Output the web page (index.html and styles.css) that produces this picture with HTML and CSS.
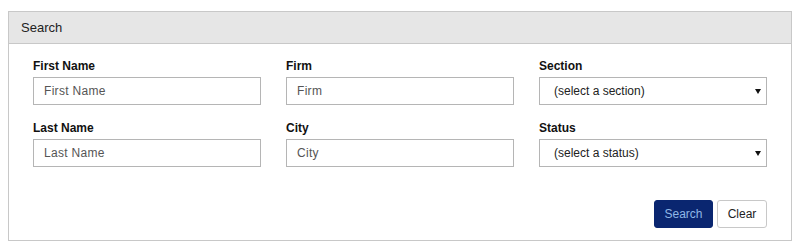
FILE: index.html
```html
<!DOCTYPE html>
<html lang="en">
<head>
    <meta charset="UTF-8">
    <meta name="viewport" content="width=device-width, initial-scale=1.0">
    <title>Search</title>
    <link rel="stylesheet" href="styles.css">
</head>
<body>
    <div class="panel">
        <div class="panel-heading">Search</div>
        <div class="panel-body">
            <div class="grid">
                <div class="field">
                    <label for="first">First Name</label>
                    <input type="text" id="first" placeholder="First Name">
                </div>
                <div class="field">
                    <label for="firm">Firm</label>
                    <input type="text" id="firm" placeholder="Firm">
                </div>
                <div class="field">
                    <label for="section">Section</label>
                    <div class="select-wrap">
                        <select id="section">
                            <option>(select a section)</option>
                        </select>
                    </div>
                </div>
                <div class="field">
                    <label for="last">Last Name</label>
                    <input type="text" id="last" placeholder="Last Name">
                </div>
                <div class="field">
                    <label for="city">City</label>
                    <input type="text" id="city" placeholder="City">
                </div>
                <div class="field">
                    <label for="status">Status</label>
                    <div class="select-wrap">
                        <select id="status">
                            <option>(select a status)</option>
                        </select>
                    </div>
                </div>
            </div>
            <div class="actions">
                <button class="btn btn-primary">Search</button>
                <button class="btn">Clear</button>
            </div>
        </div>
    </div>
</body>
</html>
```

FILE: styles.css
```css
/* Painel de busca */
body {
    font-family: "Liberation Sans", Arial, sans-serif;
    background-color: #fff;
    color: #222;
    margin: 0;
    padding: 11px 8px 0;
}
.panel {
    border: 1px solid #c8c8c8;
    background-color: #fff;
}
.panel-heading {
    background-color: #e6e6e6;
    border-bottom: 1px solid #c8c8c8;
    height: 31px;
    line-height: 31px;
    padding-left: 12px;
    font-size: 13px;
    color: #222;
}
.panel-body {
    padding: 15px 24px 12px;
}
.grid {
    display: grid;
    grid-template-columns: repeat(3, 1fr);
    column-gap: 25px;
    row-gap: 16px;
}
label {
    display: block;
    font-weight: bold;
    font-size: 12px;
    line-height: 14px;
    margin-bottom: 4px;
    color: #111;
}
input, select {
    display: block;
    width: 100%;
    height: 28px;
    box-sizing: border-box;
    border: 1px solid #b5b5b5;
    border-radius: 0;
    padding: 0 10px;
    font-family: inherit;
    font-size: 12px;
    color: #444;
    background-color: #fff;
    margin: 0;
}
input::placeholder {
    color: #555;
    letter-spacing: 0.3px;
}
select {
    appearance: none;
    -webkit-appearance: none;
    color: #222;
    padding-left: 14px;
}
.select-wrap {
    position: relative;
}
.select-wrap::after {
    content: "";
    position: absolute;
    right: 6px;
    top: 12px;
    border-left: 3px solid transparent;
    border-right: 3px solid transparent;
    border-top: 5px solid #111;
    pointer-events: none;
}
.actions {
    display: flex;
    justify-content: flex-end;
    gap: 4px;
    margin-top: 33px;
}
.btn {
    height: 28px;
    box-sizing: border-box;
    border: 1px solid #c8c8c8;
    border-radius: 3px;
    background-color: #fff;
    font-family: inherit;
    font-size: 12px;
    color: #222;
    padding: 0;
    width: 50px;
    cursor: pointer;
}
.btn-primary {
    background-color: #0a2670;
    border-color: #0a2670;
    color: #8fb8e6;
    width: 59px;
}
```
